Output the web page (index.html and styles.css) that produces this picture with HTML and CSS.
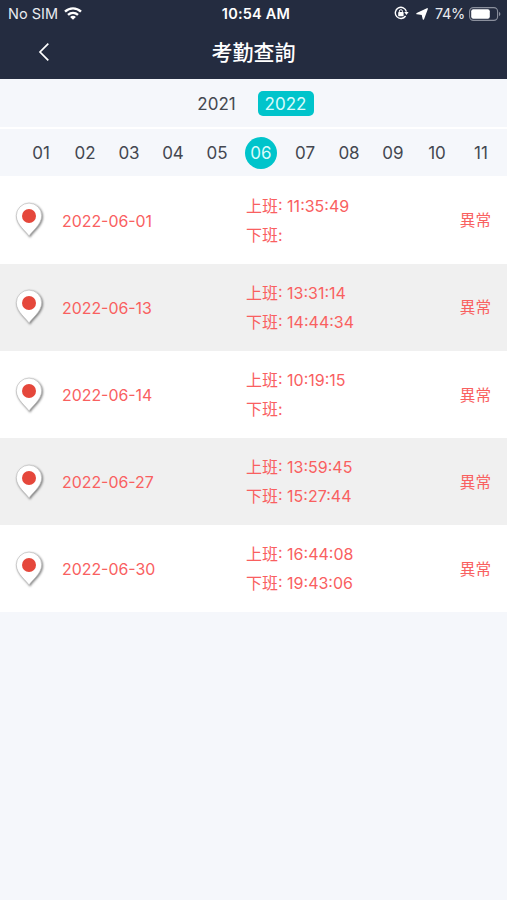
FILE: index.html
```html
<!DOCTYPE html>
<html lang="zh-Hant">
<head>
  <meta charset="UTF-8" />
  <meta name="viewport" content="width=device-width, initial-scale=1" />
  <title>考勤查詢</title>
  <link rel="stylesheet" href="styles.css">
</head>
<body>
  <svg width="0" height="0" class="sprite">
    <symbol id="pin" viewBox="0 0 34 40">
      <path d="M17 36.2 C15 32 4.3 25 4.3 15.8 A12.7 12.7 0 0 1 29.7 15.8 C29.7 25 19 32 17 36.2 Z" fill="#fff" stroke="#bbb" stroke-width="0.7" />
      <circle cx="17" cy="16" r="7" fill="#e5473b" />
    </symbol>
  </svg>

  <header>
    <div class="status-bar">
      <div class="carrier">
        <span>No SIM</span>
        <svg width="18" height="13" viewBox="0 0 18 13" fill="none" stroke="#fff" stroke-width="2.4">
          <path d="M1 4.6 C5.6 0.3 12.4 0.3 17 4.6" />
          <path d="M4 7.9 C7 5.2 11 5.2 14 7.9" />
          <path d="M9 12.8 L6.1 9.9 C7.6 8.5 10.4 8.5 11.9 9.9 Z" fill="#fff" stroke="none" />
        </svg>
      </div>
      <div class="clock">10:54 AM</div>
      <div class="indicators">
        <svg class="lock" width="15" height="14" viewBox="0 0 15 14" fill="none" stroke="#fff" stroke-width="1.4">
          <path d="M11.6 10 A5.6 5.6 0 1 1 12.4 5.6" />
          <path d="M10.2 6 H14.6 L12.4 9 Z" fill="#fff" stroke="none" />
          <rect x="4.2" y="6.1" width="5.4" height="4.2" rx="0.6" fill="#fff" stroke="none" />
          <path d="M5.4 6.5 V5.2 A1.5 1.5 0 0 1 8.4 5.2 V6.5" stroke-width="1" />
        </svg>
        <svg class="arrow" width="12" height="12" viewBox="0 0 12 12">
          <path d="M11.2 0.8 L7.4 11 L6.3 6.4 L1 5.6 Z" fill="#fff" stroke="#fff" stroke-width="1.4" stroke-linejoin="round" />
        </svg>
        <span>74%</span>
        <svg class="battery" width="32" height="14" viewBox="0 0 32 14">
          <rect x="0.6" y="0.6" width="28" height="12.8" rx="3.8" fill="none" stroke="#8b909d" stroke-width="1.1" />
          <rect x="2.2" y="2.2" width="18.6" height="9.6" rx="2" fill="#fff" />
          <path d="M30 5 C31.8 5.4 31.8 8.6 30 9 Z" fill="#8b909d" />
        </svg>
      </div>
    </div>
    <div class="nav-bar">
      <svg class="back" width="12" height="20" viewBox="0 0 12 20" fill="none" stroke="#fff" stroke-width="1.7">
        <path d="M10.3 1.7 L2 10 L10.3 18.3" />
      </svg>
      <h1>考勤查詢</h1>
    </div>
  </header>

  <div class="years">
    <span>2021</span>
    <span class="active">2022</span>
  </div>

  <div class="months" id="months"></div>

  <div id="records"></div>

  <script>
    const records = [
      { date: "2022-06-01", start: "11:35:49", end: "" },
      { date: "2022-06-13", start: "13:31:14", end: "14:44:34" },
      { date: "2022-06-14", start: "10:19:15", end: "" },
      { date: "2022-06-27", start: "13:59:45", end: "15:27:44" },
      { date: "2022-06-30", start: "16:44:08", end: "19:43:06" }
    ];

    const months = document.getElementById("months");
    for (let m = 1; m <= 11; m++) {
      const span = document.createElement("span");
      span.textContent = String(m).padStart(2, "0");
      if (m === 6) span.className = "active";
      months.appendChild(span);
    }

    document.getElementById("records").innerHTML = records.map(r => `
      <div class="record">
        <svg class="pin" width="34" height="40"><use href="#pin" /></svg>
        <div class="date">${r.date}</div>
        <div class="times">
          <div>上班: ${r.start}</div>
          <div>下班: ${r.end}</div>
        </div>
        <div class="state">異常</div>
      </div>`).join("");
  </script>
</body>
</html>
```
FILE: styles.css
```css
* {
  box-sizing: border-box;
}

body {
  margin: 0;
  min-height: 100vh;
  background: #f5f7fb;
  color: #444750;
  font-family: Inter, "Noto Sans CJK TC", sans-serif;
  overflow-x: hidden;
}

.sprite {
  display: block;
}

header {
  height: 79px;
  background: #242c40;
  color: #fff;
}

.status-bar {
  display: grid;
  grid-template-columns: 1fr auto 1fr;
  align-items: center;
  height: 27px;
  padding: 0 6px 0 8px;
  font-size: 14.5px;
  color: #e9ebf0;
}

.carrier,
.indicators {
  display: flex;
  align-items: center;
}

.carrier {
  gap: 6px;
}

.clock {
  padding-left: 3px;
  font-weight: 600;
  letter-spacing: 0.2px;
  color: #fff;
}

.indicators {
  justify-content: flex-end;
}

.indicators span {
  letter-spacing: -0.3px;
}

.lock {
  margin-bottom: 1px;
}

.arrow {
  margin: 0 7px;
}

.battery {
  margin-left: 4px;
}

.nav-bar {
  display: grid;
  grid-template-columns: 1fr auto 1fr;
  align-items: center;
  height: 51px;
}

.back {
  margin: 0 0 1px 38px;
}

h1 {
  margin: 0;
  font-size: 21px;
  line-height: 30px;
  font-weight: 500;
}

.years {
  display: flex;
  justify-content: center;
  align-items: center;
  gap: 13px;
  height: 50px;
  padding: 1px 5px 0 0;
  border-bottom: 2px solid #fff;
  font-size: 17px;
}

.years span {
  width: 56px;
  height: 25px;
  border-radius: 5px;
  line-height: 26px;
  text-align: center;
}

.active {
  background: #00c4cb;
  color: #d9fbfb;
}

.months {
  display: flex;
  align-items: center;
  gap: 12px;
  height: 47.4px;
  padding-left: 25px;
  font-size: 17px;
}

.months span {
  flex: 0 0 32px;
  height: 32px;
  border-radius: 50%;
  line-height: 32px;
  text-align: center;
}

.record {
  display: grid;
  grid-template-columns: 50px 184px 1fr auto;
  align-items: center;
  height: 87.2px;
  padding: 1.4px 16px 0 12px;
  background: #fff;
  color: #f9605f;
  font-size: 16px;
}

.record:nth-child(even) {
  background: #f0f0f0;
}

.pin {
  margin-bottom: 1px;
  filter: drop-shadow(1px 1px 1px rgba(0, 0, 0, 0.5));
}

.date {
  padding-top: 1px;
  font-size: 15.9px;
}

.times {
  line-height: 29px;
}

.state {
  padding-top: 1px;
  font-size: 15.6px;
  line-height: 22px;
}
```
